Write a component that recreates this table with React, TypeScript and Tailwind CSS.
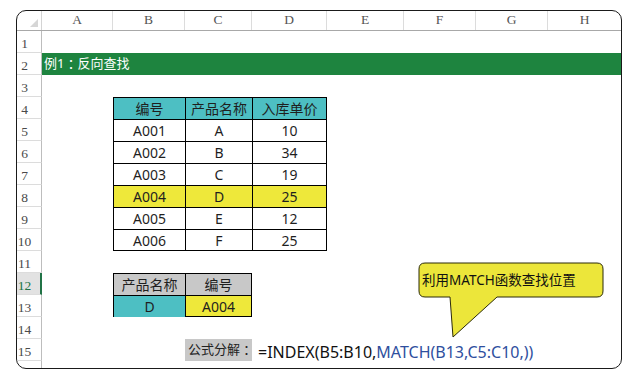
import React from "react";

const COLS = ["A", "B", "C", "D", "E", "F", "G", "H"];
const COL_W = ["w-[71px]", "w-[72px]", "w-[67px]", "w-[75px]", "w-[77px]", "w-[72px]", "w-[72px]", "w-[73px]"];

const products = [
  ["A001", "A", "10"],
  ["A002", "B", "34"],
  ["A003", "C", "19"],
  ["A004", "D", "25"],
  ["A005", "E", "12"],
  ["A006", "F", "25"],
];

const cellFont = { fontFamily: "'Noto Sans', 'Noto Sans CJK SC', sans-serif" };
const sans = "font-['Noto_Sans','Noto_Sans_CJK_SC',sans-serif]";
const jpColon = "font-['Noto_Sans_CJK_JP',sans-serif]";

function TCell({ w, bg, last, bottom, children }: { w: string; bg: string; last?: boolean; bottom?: boolean; children?: React.ReactNode }) {
  return (
    <div
      className={`${w} ${bg} h-full shrink-0 flex items-center justify-center border-l border-t border-black text-[14px] text-[#1f1f1f] whitespace-nowrap ${last ? "border-r" : ""} ${bottom ? "border-b" : ""}`}
    >
      {children}
    </div>
  );
}

function Blank({ w }: { w: string }) {
  return <div className={`${w} h-full shrink-0`} />;
}

function RowHead({ n, active }: { n: number; active?: boolean }) {
  return (
    <div
      className={`w-[25px] h-full shrink-0 flex items-end pb-[2px] border-b border-[#dcdcdc] font-['Liberation_Serif',serif] text-[13.5px] leading-none ${
        active ? "bg-[#e2e2e2] text-[#217346] border-r-2 border-r-[#217346]" : "text-[#4a4a4a] border-r border-r-[#bdbdbd]"
      }`}
    >
      <span className="w-[15px] text-center">{n <= 15 ? n : ""}</span>
    </div>
  );
}

function rowContent(r: number): React.ReactNode {
  if (r === 2) {
    return (
      <div className="flex-1 h-full bg-[#1e843f] flex items-center pl-[2px] text-[13px] text-white whitespace-nowrap">
        例1<span className={jpColon}>：</span>反向查找
      </div>
    );
  }
  if (r >= 4 && r <= 10) {
    const head = r === 4;
    const data = head ? ["编号", "产品名称", "入库单价"] : products[r - 5];
    const bg = head ? "bg-[#4dbfc3]" : r === 8 ? "bg-[#eee83a]" : "bg-white";
    const bottom = r === 10;
    return (
      <>
        <Blank w={COL_W[0]} />
        <TCell w={COL_W[1]} bg={bg} bottom={bottom}>{data[0]}</TCell>
        <TCell w={COL_W[2]} bg={bg} bottom={bottom}>{data[1]}</TCell>
        <TCell w={COL_W[3]} bg={bg} bottom={bottom} last>{data[2]}</TCell>
      </>
    );
  }
  if (r === 12 || r === 13) {
    const head = r === 12;
    return (
      <>
        <Blank w={COL_W[0]} />
        <TCell w={COL_W[1]} bg={head ? "bg-[#c8c8c8]" : "bg-[#4dbfc3]"}>{head ? "产品名称" : "D"}</TCell>
        <TCell w={COL_W[2]} bg={head ? "bg-[#c8c8c8]" : "bg-[#eee83a]"} last bottom={!head}>
          {head ? "编号" : "A004"}
        </TCell>
      </>
    );
  }
  if (r === 15) {
    return (
      <>
        <Blank w={COL_W[0]} />
        <Blank w={COL_W[1]} />
        <div className={`${COL_W[2]} h-full shrink-0 bg-[#c8c8c8] flex items-center pl-[3px] text-[13px] text-[#222] whitespace-nowrap`}>
          公式分解<span className={jpColon}>：</span>
        </div>
        <div className="flex-1 h-full flex items-center pl-[6px] pt-[3px] whitespace-nowrap text-[16px]">
          <span className="text-[#111]">=INDEX(B5:B10,</span>
          <span className="text-[#2f4f9e]">MATCH(B13,C5:C10,))</span>
        </div>
      </>
    );
  }
  return null;
}

export default function App() {
  const rows = Array.from({ length: 16 }, (_, i) => i + 1);
  return (
    <div className="w-[637px] h-[379px] bg-white pt-[10px] pl-[16px]" style={cellFont}>
      <div className={`relative w-[606px] h-[359px] border border-[#1a1a1a] rounded-[10px] overflow-hidden ${sans}`}>
        {/* column header */}
        <div className="flex h-[20px] border-b border-[#a8a8a8]">
          <div className="w-[25px] h-full shrink-0 border-r border-[#d4d4d4] flex items-end justify-end pr-[3px] pb-[3px]">
            <svg width="8" height="8" viewBox="0 0 8 8">
              <path d="M8 0 L8 8 L0 8 Z" fill="#d6d6d6" />
            </svg>
          </div>
          {COLS.map((c, i) => (
            <div
              key={c}
              className={`${COL_W[i]} h-full shrink-0 flex items-center justify-center font-['Liberation_Serif',serif] text-[13.5px] text-[#555] ${
                i < COLS.length - 1 ? "border-r border-[#dcdcdc]" : ""
              }`}
            >
              {c}
            </div>
          ))}
        </div>
        {rows.map((r) => (
          <div key={r} className="flex h-[22px]">
            <RowHead n={r} active={r === 12} />
            {rowContent(r)}
          </div>
        ))}

        {/* callout */}
        <svg className="absolute left-[401px] top-[251px]" width="187" height="77" viewBox="0 0 187 77">
          <path
            d="M7 1 H179 Q185 1 185 7 V29 Q185 35 179 35 H79 L35 75 L32 35 H7 Q1 35 1 29 V7 Q1 1 7 1 Z"
            fill="#ece63a"
            stroke="#2b2a08"
            strokeWidth="1"
          />
        </svg>
        <div className="absolute left-[405px] top-[252px] h-[34px] flex items-center text-[13.5px] text-[#111] whitespace-nowrap">
          利用MATCH函数查找位置
        </div>
      </div>
    </div>
  );
}
